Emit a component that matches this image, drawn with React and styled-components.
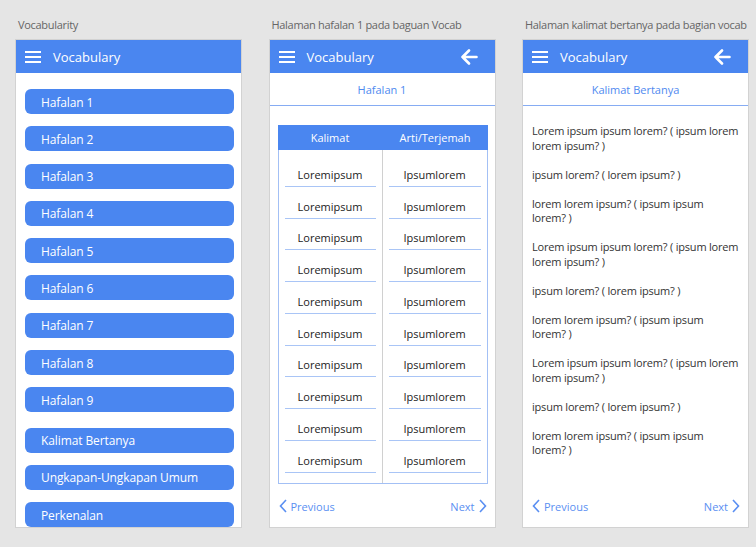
import React from 'react';
import styled, { createGlobalStyle } from 'styled-components';

const GlobalStyle = createGlobalStyle`
  body {
    margin: 0;
    background: #e5e5e5;
    font-family: "Open Sans", "Noto Sans", sans-serif;
  }
`;

const Page = styled.div`
  display: flex;
  gap: 28.5px;
  padding: 16px 0 0 16px;
  height: 547px;
  box-sizing: border-box;
`;

const Column = styled.div`
  width: 225px;
  display: flex;
  flex-direction: column;
`;

const Caption = styled.div`
  font-size: 11px;
  letter-spacing: -0.3px;
  color: #666;
  height: 24px;
  line-height: 18px;
  padding-left: 2px;
  white-space: nowrap;
`;

const Screen = styled.div`
  height: 487px;
  background: #fff;
  box-shadow: 0 0 0 1px #d2d2d2;
  display: flex;
  flex-direction: column;
  overflow: hidden;
`;

const Header = styled.div`
  height: 33px;
  flex-shrink: 0;
  background: #4a86f0;
  display: flex;
  align-items: center;
  padding: 0 17px 0 9px;
  color: #fff;
`;

const Burger = styled.div`
  width: 16px;
  display: flex;
  flex-direction: column;
  gap: 3px;
  margin-right: 12px;
  span {
    display: block;
    height: 2px;
    background: #fff;
  }
`;

const Title = styled.div`
  font-size: 13px;
  flex: 1;
`;

const MenuList = styled.div`
  display: flex;
  flex-direction: column;
  gap: 12.3px;
  padding: 16px 7px 0 9px;
`;

const MenuButton = styled.div`
  height: 25px;
  flex-shrink: 0;
  border-radius: 6px;
  background: #4a86f0;
  color: #fff;
  font-size: 12px;
  letter-spacing: -0.1px;
  display: flex;
  align-items: center;
  padding: 1px 0 0 16px;
  box-sizing: border-box;
  margin-top: ${p => (p.$extra ? '3px' : '0')};
`;

const SubHeader = styled.div`
  height: 33px;
  flex-shrink: 0;
  display: flex;
  align-items: center;
  justify-content: center;
  font-size: 11px;
  color: #4f8af0;
  border-bottom: 1px solid #86acf3;
  box-sizing: border-box;
`;

const Table = styled.div`
  margin: 19px 7px 0 8px;
  border: 1px solid #a3c0f5;
  border-top: none;
`;

const TableHead = styled.div`
  display: grid;
  grid-template-columns: 1fr 1fr;
  height: 25px;
  background: #4a86f0;
  color: #fff;
  font-size: 11px;
  margin: 0 -1px;
  div {
    display: flex;
    align-items: center;
    justify-content: center;
  }
`;

const TableBody = styled.div`
  display: grid;
  grid-template-columns: 1fr 1fr;
`;

const Col = styled.div`
  padding: 5px 6px 10px;
  border-right: ${p => (p.$divider ? '1px solid #d0d0d0' : 'none')};
`;

const Cell = styled.div`
  height: 31.75px;
  box-sizing: border-box;
  display: flex;
  align-items: center;
  justify-content: center;
  padding-top: 8px;
  font-size: 11px;
  color: #222;
  border-bottom: 1.5px solid #a9c5f6;
`;

const Footer = styled.div`
  margin-top: auto;
  height: 40px;
  flex-shrink: 0;
  display: flex;
  align-items: center;
  justify-content: space-between;
  padding: 0 8px 2px 9px;
  box-sizing: border-box;
`;

const NavLink = styled.div`
  display: flex;
  align-items: center;
  gap: 4px;
  font-size: 11px;
  color: #5a8ff2;
`;

const Content = styled.div`
  padding: 18px 4px 0 9px;
  font-size: 11px;
  letter-spacing: -0.2px;
  line-height: 14.5px;
  color: #333;
  p {
    margin: 0 0 14.5px;
  }
`;

const Hamburger = () => (
  <Burger>
    <span />
    <span />
    <span />
  </Burger>
);

const BackArrow = () => (
  <svg width="18" height="16" viewBox="0 0 18 16">
    <path d="M16.5 8H2.5M9 1.5L2.5 8L9 14.5" fill="none" stroke="#fff" strokeWidth="2.6" strokeLinecap="round" strokeLinejoin="round" />
  </svg>
);

const Chevron = ({ dir }) => (
  <svg width="8" height="14" viewBox="0 0 8 14">
    <path
      d={dir === 'left' ? 'M7 1L1.5 7L7 13' : 'M1 1L6.5 7L1 13'}
      fill="none"
      stroke="#5a8ff2"
      strokeWidth="1.6"
    />
  </svg>
);

const Pager = () => (
  <Footer>
    <NavLink>
      <Chevron dir="left" />
      Previous
    </NavLink>
    <NavLink>
      Next
      <Chevron dir="right" />
    </NavLink>
  </Footer>
);

const menu = [
  'Hafalan 1', 'Hafalan 2', 'Hafalan 3', 'Hafalan 4', 'Hafalan 5',
  'Hafalan 6', 'Hafalan 7', 'Hafalan 8', 'Hafalan 9',
];

const long = ['Lorem ipsum ipsum lorem? ( ipsum lorem', 'lorem ipsum? )'];
const short = ['ipsum lorem? ( lorem ipsum? )'];
const mid = ['lorem lorem ipsum? ( ipsum ipsum', 'lorem? )'];
const questions = [long, short, mid, long, short, mid, long, short, mid];

const rows = Array.from({ length: 10 });

export default function App() {
  return (
    <>
      <GlobalStyle />
      <Page>
        <Column>
          <Caption>Vocabularity</Caption>
          <Screen>
            <Header>
              <Hamburger />
              <Title>Vocabulary</Title>
            </Header>
            <MenuList>
              {menu.map(m => (
                <MenuButton key={m}>{m}</MenuButton>
              ))}
              <MenuButton $extra>Kalimat Bertanya</MenuButton>
              <MenuButton>Ungkapan-Ungkapan Umum</MenuButton>
              <MenuButton>Perkenalan</MenuButton>
            </MenuList>
          </Screen>
        </Column>

        <Column>
          <Caption>Halaman hafalan 1 pada baguan Vocab</Caption>
          <Screen>
            <Header>
              <Hamburger />
              <Title>Vocabulary</Title>
              <BackArrow />
            </Header>
            <SubHeader>Hafalan 1</SubHeader>
            <Table>
              <TableHead>
                <div>Kalimat</div>
                <div>Arti/Terjemah</div>
              </TableHead>
              <TableBody>
                <Col $divider>
                  {rows.map((_, i) => (
                    <Cell key={i}>Loremipsum</Cell>
                  ))}
                </Col>
                <Col>
                  {rows.map((_, i) => (
                    <Cell key={i}>Ipsumlorem</Cell>
                  ))}
                </Col>
              </TableBody>
            </Table>
            <Pager />
          </Screen>
        </Column>

        <Column>
          <Caption>Halaman kalimat bertanya pada bagian vocab</Caption>
          <Screen>
            <Header>
              <Hamburger />
              <Title>Vocabulary</Title>
              <BackArrow />
            </Header>
            <SubHeader>Kalimat Bertanya</SubHeader>
            <Content>
              {questions.map((lines, i) => (
                <p key={i}>
                  {lines.map((l, j) => (
                    <React.Fragment key={j}>
                      {j > 0 && <br />}
                      {l}
                    </React.Fragment>
                  ))}
                </p>
              ))}
            </Content>
            <Pager />
          </Screen>
        </Column>
      </Page>
    </>
  );
}
